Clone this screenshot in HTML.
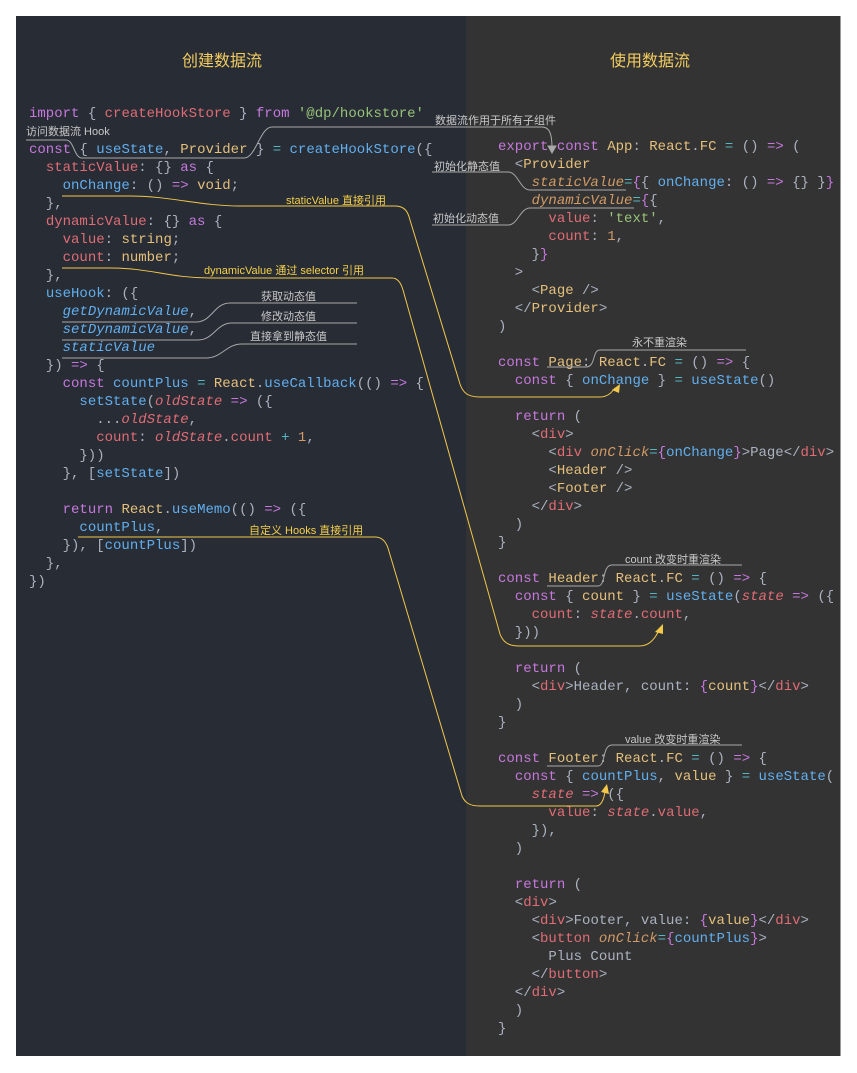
<!DOCTYPE html>
<html><head><meta charset="utf-8"><style>
body{margin:0;width:857px;height:1073px;background:#fff;position:relative;overflow:hidden;font-family:"Liberation Sans","Noto Sans CJK SC",sans-serif}
.l{position:absolute;left:16px;top:16px;width:450px;height:1040px;background:#282c35}
.r{position:absolute;left:466px;top:16px;width:374px;height:1040px;background:#333;border-right:1px solid #999}
.t{position:absolute;color:#f2cc60;font-size:16px;top:47px}
pre{position:absolute;margin:0;font-family:"Liberation Mono",monospace;font-size:14px;line-height:18px;color:#abb2bf}
.k{color:#c678dd}.v{color:#e06c75}.f{color:#61afef}.y{color:#e5c07b}.s{color:#98c379}.n{color:#d19a66}.c{color:#56b6c2}.i{font-style:italic}
.a{position:absolute;font-size:11px;color:#c8c8c8;white-space:nowrap}
.b{position:absolute;font-size:11px;color:#f5d04a;white-space:nowrap}
svg{position:absolute;left:0;top:0}
</style></head><body>
<div class="l"></div><div class="r"></div>
<div class="t" style="left:182px">创建数据流</div>
<div class="t" style="left:610px">使用数据流</div>
<pre style="left:29px;top:105px"><span class="k">import</span> { <span class="v">createHookStore</span> } <span class="k">from</span> <span class="s">'@dp/hookstore'</span></pre>
<pre style="left:29px;top:141px"><span class="k">const</span> { <span class="f">useState</span>, <span class="y">Provider</span> } <span class="c">=</span> <span class="f">createHookStore</span>({
  <span class="v">staticValue</span>: {} <span class="k">as</span> {
    <span class="f">onChange</span>: () <span class="k">=&gt;</span> <span class="y">void</span>;
  },
  <span class="v">dynamicValue</span>: {} <span class="k">as</span> {
    <span class="v">value</span>: <span class="y">string</span>;
    <span class="v">count</span>: <span class="y">number</span>;
  },
  <span class="f">useHook</span>: ({
    <span class="f i">getDynamicValue</span>,
    <span class="f i">setDynamicValue</span>,
    <span class="f i">staticValue</span>
  }) <span class="k">=&gt;</span> {
    <span class="k">const</span> <span class="f">countPlus</span> <span class="c">=</span> <span class="y">React</span>.<span class="f">useCallback</span>(() <span class="k">=&gt;</span> {
      <span class="f">setState</span>(<span class="v i">oldState</span> <span class="k">=&gt;</span> ({
        ...<span class="v i">oldState</span>,
        <span class="v">count</span>: <span class="v i">oldState</span>.<span class="v">count</span> <span class="c">+</span> <span class="n">1</span>,
      }))
    }, [<span class="f">setState</span>])

    <span class="k">return</span> <span class="y">React</span>.<span class="f">useMemo</span>(() <span class="k">=&gt;</span> ({
      <span class="f">countPlus</span>,
    }), [<span class="f">countPlus</span>])
  },
})</pre>
<pre style="left:498px;top:138px"><span class="k">export</span> <span class="k">const</span> <span class="y">App</span>: <span class="y">React</span>.<span class="y">FC</span> <span class="c">=</span> () <span class="k">=&gt;</span> (
  &lt;<span class="y">Provider</span>
    <span class="n i">staticValue</span><span class="c">=</span><span class="k">{</span>{ <span class="f">onChange</span>: () <span class="k">=&gt;</span> {} }<span class="k">}</span>
    <span class="n i">dynamicValue</span><span class="c">=</span><span class="k">{</span>{
      <span class="v">value</span>: <span class="s">'text'</span>,
      <span class="v">count</span>: <span class="n">1</span>,
    }<span class="k">}</span>
  &gt;
    &lt;<span class="y">Page</span> /&gt;
  &lt;/<span class="y">Provider</span>&gt;
)

<span class="k">const</span> <span class="y">Page</span>: <span class="y">React</span>.<span class="y">FC</span> <span class="c">=</span> () <span class="k">=&gt;</span> {
  <span class="k">const</span> { <span class="f">onChange</span> } <span class="c">=</span> <span class="f">useState</span>()

  <span class="k">return</span> (
    &lt;<span class="v">div</span>&gt;
      &lt;<span class="v">div</span> <span class="n i">onClick</span><span class="c">=</span><span class="k">{</span><span class="f">onChange</span><span class="k">}</span>&gt;Page&lt;/<span class="v">div</span>&gt;
      &lt;<span class="y">Header</span> /&gt;
      &lt;<span class="y">Footer</span> /&gt;
    &lt;/<span class="v">div</span>&gt;
  )
}

<span class="k">const</span> <span class="y">Header</span>: <span class="y">React</span>.<span class="y">FC</span> <span class="c">=</span> () <span class="k">=&gt;</span> {
  <span class="k">const</span> { <span class="y">count</span> } <span class="c">=</span> <span class="f">useState</span>(<span class="v i">state</span> <span class="k">=&gt;</span> ({
    <span class="v">count</span>: <span class="v i">state</span>.<span class="v">count</span>,
  }))

  <span class="k">return</span> (
    &lt;<span class="v">div</span>&gt;Header, count: <span class="k">{</span><span class="y">count</span><span class="k">}</span>&lt;/<span class="v">div</span>&gt;
  )
}

<span class="k">const</span> <span class="y">Footer</span>: <span class="y">React</span>.<span class="y">FC</span> <span class="c">=</span> () <span class="k">=&gt;</span> {
  <span class="k">const</span> { <span class="f">countPlus</span>, <span class="y">value</span> } <span class="c">=</span> <span class="f">useState</span>(
    <span class="v i">state</span> <span class="k">=&gt;</span> ({
      <span class="v">value</span>: <span class="v i">state</span>.<span class="v">value</span>,
    }),
  )

  <span class="k">return</span> (
  &lt;<span class="v">div</span>&gt;
    &lt;<span class="v">div</span>&gt;Footer, value: <span class="k">{</span><span class="y">value</span><span class="k">}</span>&lt;/<span class="v">div</span>&gt;
    &lt;<span class="v">button</span> <span class="n i">onClick</span><span class="c">=</span><span class="k">{</span><span class="f">countPlus</span><span class="k">}</span>&gt;
      Plus Count
    &lt;/<span class="v">button</span>&gt;
  &lt;/<span class="v">div</span>&gt;
  )
}</pre>
<div class="a" style="left:26px;top:123px">访问数据流 Hook</div>
<div class="a" style="left:435px;top:112px">数据流作用于所有子组件</div>
<div class="a" style="left:434px;top:158px">初始化静态值</div>
<div class="a" style="left:433px;top:210px">初始化动态值</div>
<div class="a" style="left:261px;top:288px">获取动态值</div>
<div class="a" style="left:261px;top:308px">修改动态值</div>
<div class="a" style="left:250px;top:328px">直接拿到静态值</div>
<div class="a" style="left:632px;top:334px">永不重渲染</div>
<div class="a" style="left:625px;top:551px">count 改变时重渲染</div>
<div class="a" style="left:625px;top:731px">value 改变时重渲染</div>
<div class="b" style="left:286px;top:192px">staticValue 直接引用</div>
<div class="b" style="left:204px;top:262px">dynamicValue 通过 selector 引用</div>
<div class="b" style="left:249px;top:522px">自定义 Hooks 直接引用</div>
<svg width="857" height="1073" fill="none" stroke-width="1">
<g stroke="#a8a8a8">
<path d="M26 140 H66 C74 140 74 158 82 158 H244 C256 158 260 127 272 127 H542 C550 127 552 135 552 148"/>
<path d="M548 146 L552 153 L556 146 Z" fill="#a8a8a8"/>
<path d="M432 172 H508 C518 172 520 190 530 190 H626"/>
<path d="M432 225 H508 C518 225 520 208 530 208 H634"/>
<path d="M62 322 H196 C212 322 214 303 230 303 H357"/>
<path d="M62 340 H198 C214 340 216 323 232 323 H357"/>
<path d="M62 358 H206 C222 358 226 344 242 344 H357"/>
<path d="M547 367 H586 C596 367 592 350 600 350 H746"/>
<path d="M547 586 H598 C606 586 602 565 612 565 H742"/>
<path d="M547 766 H598 C606 766 602 745 612 745 H742"/>
</g>
<g stroke="#f2c84a">
<path d="M62 196 H130 C170 196 200 206 240 206 H395 C405 206 408 212 410 220 L460 384 C463 393 468 397 480 397 H600 C608 397 612 392 615 388"/>
<path d="M62 268 H110 C150 268 170 278 210 278 H392 C398 278 401 283 403 290 L500 634 C503 642 508 646 520 646 H640 C650 646 656 637 659 630"/>
<path d="M78 537 H375 C382 537 386 542 388 548 L462 796 C465 803 470 806 480 806 H596 C602 806 604 798 605 792"/>
</g>
<g fill="#f2c84a">
<path d="M612 390 L620 384 L619 393 Z"/>
<path d="M655 632 L663 624 L663 634 Z"/>
<path d="M601 792 L607 784 L609 794 Z"/>
</g>
</svg>
</body></html>
